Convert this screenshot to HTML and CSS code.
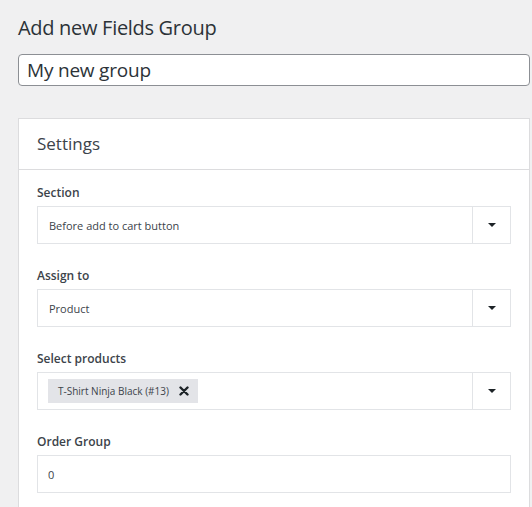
FILE: index.html
```html
<!DOCTYPE html>
<html lang="en">
  <head>
    <meta charset="UTF-8" />
    <title>Add new Fields Group</title>
    <link rel="stylesheet" href="styles.css">
  </head>

  <body>
    <h1 class="page-title">Add new Fields Group</h1>

    <input class="title-input" type="text" value="My new group" />

    <!-- Settings box -->
    <div class="card">
      <div class="card-header">Settings</div>

      <div class="card-body">
        <div class="field">
          <label class="field-label">Section</label>
          <div class="select">
            <span class="select-value">Before add to cart button</span>
            <span class="select-arrow"><i class="caret"></i></span>
          </div>
        </div>

        <div class="field">
          <label class="field-label">Assign to</label>
          <div class="select">
            <span class="select-value">Product</span>
            <span class="select-arrow"><i class="caret"></i></span>
          </div>
        </div>

        <div class="field">
          <label class="field-label">Select products</label>
          <div class="select">
            <span class="select-value tags">
              <span class="tag">
                T-Shirt Ninja Black (#13)
                <svg class="tag-remove" width="10" height="10" viewBox="0 0 10 10">
                  <path d="M1.5 1.5 L8.5 8.5 M8.5 1.5 L1.5 8.5" stroke="#1d2327" stroke-width="2.4" stroke-linecap="round" />
                </svg>
              </span>
            </span>
            <span class="select-arrow"><i class="caret"></i></span>
          </div>
        </div>

        <div class="field">
          <label class="field-label">Order Group</label>
          <input class="text-input" type="text" value="0" />
        </div>
      </div>
    </div>
  </body>
</html>
```

FILE: styles.css
```css
body {
  font-family: "Open Sans", Arial, sans-serif;
  background-color: #f0f0f1;
  color: #3c434a;
  margin: 0;
  padding: 0 2px 0 18px;
}

.page-title {
  font-size: 20px;
  font-weight: 400;
  line-height: 28px;
  letter-spacing: -0.3px;
  color: #2c3338;
  margin: 0;
  padding: 14px 0 12px;
}

.title-input {
  display: block;
  box-sizing: border-box;
  width: 100%;
  height: 32px;
  margin: 0;
  padding: 0 8px;
  font-family: inherit;
  font-size: 19px;
  letter-spacing: -0.2px;
  color: #2c3338;
  background: #fff;
  border: 1px solid #8c8f94;
  border-radius: 4px;
}

.card {
  margin-top: 32px;
  background: #fff;
  border: 1px solid #dcdcde;
  border-bottom: none;
}

.card-header {
  font-size: 17px;
  line-height: 50px;
  padding: 0 18px;
  color: #3c434a;
  border-bottom: 1px solid #dcdcde;
}

.card-body {
  padding: 14px 18px 15px;
}

.field {
  margin-bottom: 23px;
}

.field:last-child {
  margin-bottom: 0;
}

.field-label {
  display: block;
  font-size: 12px;
  font-weight: 600;
  line-height: 18px;
  color: #3c434a;
  margin-bottom: 4px;
}

.select {
  display: flex;
  height: 38px;
  box-sizing: border-box;
  border: 1px solid #e2e4e7;
}

.select-value {
  flex: 1;
  display: flex;
  align-items: center;
  padding: 0 11px;
  font-size: 11px;
  color: #3c434a;
}

.tags {
  padding: 0 10px;
}

.tag {
  display: inline-flex;
  align-items: center;
  height: 24px;
  padding: 0 9px 0 10px;
  font-size: 10px;
  color: #3c434a;
  background: #e3e4e8;
}

.tag-remove {
  margin-left: 10px;
}

.select-arrow {
  width: 37px;
  display: flex;
  align-items: center;
  justify-content: center;
  border-left: 1px solid #e2e4e7;
}

.caret {
  width: 0;
  height: 0;
  border-left: 4px solid transparent;
  border-right: 4px solid transparent;
  border-top: 4px solid #1d2327;
}

.text-input {
  display: block;
  box-sizing: border-box;
  width: 100%;
  height: 38px;
  margin: 0;
  padding: 0 10px;
  font-family: inherit;
  font-size: 11px;
  color: #3c434a;
  background: #fff;
  border: 1px solid #e2e4e7;
  border-radius: 0;
  outline: none;
}
```
